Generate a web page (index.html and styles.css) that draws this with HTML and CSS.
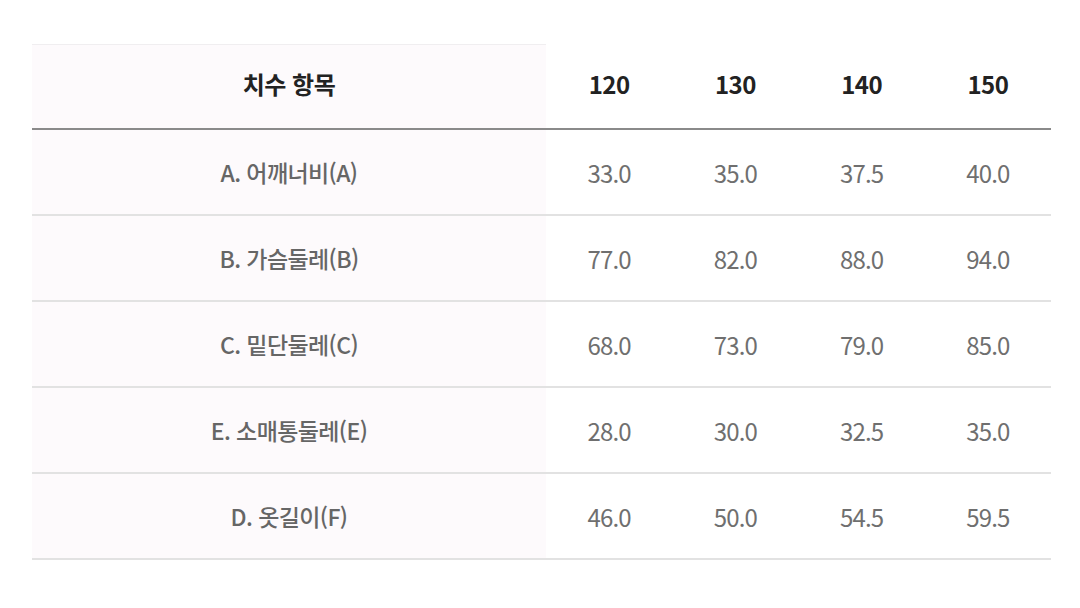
FILE: index.html
```html
<!DOCTYPE html>
<html lang="ko">
<head>
<meta charset="utf-8">
<title>사이즈 표</title>
<link rel="stylesheet" href="styles.css">
</head>
<body>
<table class="size-table">
  <thead>
    <tr>
      <th class="label">치수 항목</th>
      <th>120</th>
      <th>130</th>
      <th>140</th>
      <th>150</th>
    </tr>
  </thead>
  <tbody>
    <tr><td class="label">A. 어깨너비(A)</td><td>33.0</td><td>35.0</td><td>37.5</td><td>40.0</td></tr>
    <tr><td class="label">B. 가슴둘레(B)</td><td>77.0</td><td>82.0</td><td>88.0</td><td>94.0</td></tr>
    <tr><td class="label">C. 밑단둘레(C)</td><td>68.0</td><td>73.0</td><td>79.0</td><td>85.0</td></tr>
    <tr><td class="label">E. 소매통둘레(E)</td><td>28.0</td><td>30.0</td><td>32.5</td><td>35.0</td></tr>
    <tr><td class="label">D. 옷길이(F)</td><td>46.0</td><td>50.0</td><td>54.5</td><td>59.5</td></tr>
  </tbody>
</table>
</body>
</html>
```
FILE: styles.css
```css
html, body {
  margin: 0;
  background: #ffffff;
}
body {
  padding: 44px 0 0 32px;
  font-family: "Noto Sans CJK KR", "Noto Sans", sans-serif;
}
.size-table {
  width: 1019px;
  border-collapse: collapse;
  table-layout: fixed;
}
.size-table th,
.size-table td {
  padding: 0;
  text-align: center;
  vertical-align: middle;
}
.size-table th {
  height: 77px;
  padding-bottom: 6px;
  font-size: 24px;
  font-weight: 700;
  color: #222222;
  letter-spacing: -0.5px;
  border-bottom: 2px solid #8a8a8a;
}
.size-table th.label {
  width: 514px;
  border-top: 1px solid #f0eef0;
}
.size-table td {
  height: 84px;
  font-size: 24px;
  font-weight: 400;
  color: #6f6f6f;
  letter-spacing: -0.8px;
  border-bottom: 2px solid #e2e2e2;
}
.size-table .label {
  background: #fdfafc;
}
.size-table td.label {
  font-weight: 500;
  color: #666666;
  font-size: 23px;
  letter-spacing: -0.6px;
}
```
